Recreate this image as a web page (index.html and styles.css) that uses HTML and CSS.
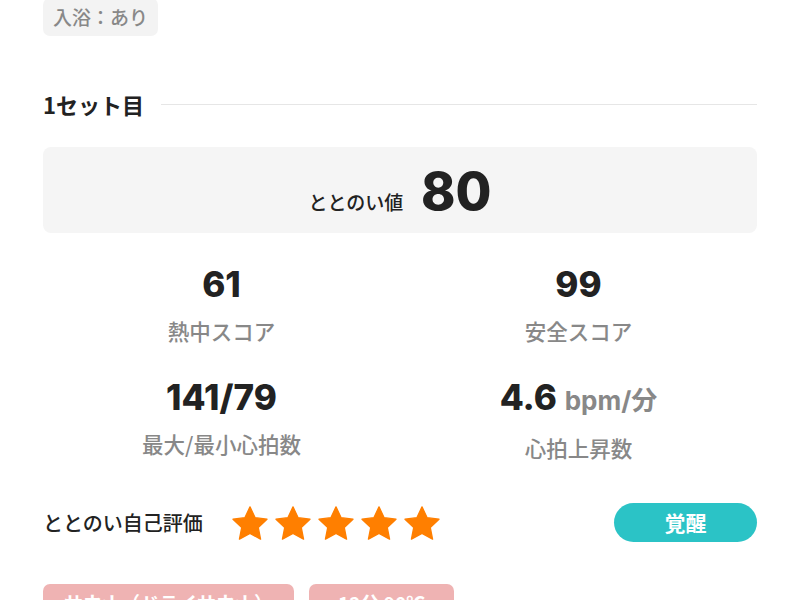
FILE: index.html
```html
<!DOCTYPE html>
<html lang="ja">
<head>
  <meta charset="UTF-8">
  <meta name="viewport" content="width=device-width, initial-scale=1.0">
  <title>サウナ記録</title>
  <link rel="stylesheet" href="styles.css">
</head>
<body>
<main class="record">
  <div class="tags">
    <span class="tag">入浴：あり</span>
  </div>

  <section class="set">
    <div class="set-title">
      <h2>1セット目</h2>
      <span class="set-line"></span>
    </div>

    <div class="score-card">
      <div class="score">
        <span class="score-label">ととのい値</span>
        <span class="score-value">80</span>
      </div>
    </div>

    <div class="stats">
      <div class="stat">
        <div class="stat-value">61</div>
        <div class="stat-label">熱中スコア</div>
      </div>
      <div class="stat">
        <div class="stat-value">99</div>
        <div class="stat-label">安全スコア</div>
      </div>
      <div class="stat">
        <div class="stat-value">141/79</div>
        <div class="stat-label">最大/最小心拍数</div>
      </div>
      <div class="stat">
        <div class="stat-value">4.6 <span class="stat-unit">bpm/分</span></div>
        <div class="stat-label">心拍上昇数</div>
      </div>
    </div>

    <div class="rating">
      <span class="rating-label">ととのい自己評価</span>
      <div class="stars">
        <svg class="star" viewBox="1.2 1.3 21.6 20.6"><path d="M12 1.8l3.1 6.6 7.2.9-5.3 5 1.4 7.1L12 17.9l-6.4 3.5L7 14.3l-5.3-5 7.2-.9z"/></svg>
        <svg class="star" viewBox="1.2 1.3 21.6 20.6"><path d="M12 1.8l3.1 6.6 7.2.9-5.3 5 1.4 7.1L12 17.9l-6.4 3.5L7 14.3l-5.3-5 7.2-.9z"/></svg>
        <svg class="star" viewBox="1.2 1.3 21.6 20.6"><path d="M12 1.8l3.1 6.6 7.2.9-5.3 5 1.4 7.1L12 17.9l-6.4 3.5L7 14.3l-5.3-5 7.2-.9z"/></svg>
        <svg class="star" viewBox="1.2 1.3 21.6 20.6"><path d="M12 1.8l3.1 6.6 7.2.9-5.3 5 1.4 7.1L12 17.9l-6.4 3.5L7 14.3l-5.3-5 7.2-.9z"/></svg>
        <svg class="star" viewBox="1.2 1.3 21.6 20.6"><path d="M12 1.8l3.1 6.6 7.2.9-5.3 5 1.4 7.1L12 17.9l-6.4 3.5L7 14.3l-5.3-5 7.2-.9z"/></svg>
      </div>
      <span class="mood">覚醒</span>
    </div>

    <div class="tags">
      <span class="tag tag-sauna">サウナ（ドライサウナ）</span>
      <span class="tag tag-sauna tag-wide">12分 90℃</span>
    </div>
  </section>
</main>
</body>
</html>
```

FILE: styles.css
```css
body {
  font-family: "Noto Sans CJK JP", "Noto Sans", sans-serif;
  background-color: #fff;
  margin: 0;
  padding: 0;
  color: #222;
  overflow: hidden;
}
.record {
  padding: 0 43px;
}
.tags {
  display: flex;
  gap: 15px;
}
.record > .tags {
  margin-top: -2px;
}
.tag {
  background-color: #f3f3f3;
  color: #888;
  font-size: 19px;
  font-weight: 500;
  line-height: 26px;
  padding: 6px 10px;
  border-radius: 7px;
}
.tag-sauna {
  background-color: #efb3b3;
  color: #fff;
  font-weight: 700;
  padding: 6px 21px;
}
.tag-wide {
  padding: 6px 29px;
}
.set-title {
  display: flex;
  align-items: center;
  gap: 17px;
  margin-top: 54px;
}
.set-title h2 {
  margin: 0;
  font-size: 22px;
  font-weight: 700;
  line-height: 28px;
}
.set-line {
  flex: 1;
  height: 1px;
  background-color: #e6e6e6;
}
.score-card {
  margin-top: 29px;
  height: 86px;
  background-color: #f5f5f5;
  border-radius: 8px;
  display: flex;
  align-items: center;
  justify-content: center;
}
.score {
  margin-top: 4px;
}
.score-label {
  font-size: 19px;
  font-weight: 500;
  margin-right: 14px;
}
.score-value {
  font-family: Inter, "Noto Sans CJK JP", sans-serif;
  font-size: 52px;
  font-weight: 800;
  line-height: 1;
}
.stats {
  display: grid;
  grid-template-columns: 1fr 1fr;
  row-gap: 32px;
  margin-top: 31px;
  text-align: center;
}
.stat-value {
  font-family: Inter, "Noto Sans CJK JP", sans-serif;
  font-size: 35px;
  font-weight: 800;
  line-height: 40px;
}
.stat-unit {
  font-size: 26px;
  font-weight: 700;
  color: #888;
}
.stat-label {
  margin-top: 13px;
  font-size: 21.5px;
  font-weight: 500;
  color: #888;
  line-height: 28px;
}
.rating {
  display: flex;
  align-items: center;
  margin-top: 41px;
}
.rating-label {
  font-size: 20px;
  font-weight: 500;
  width: 189px;
}
.stars {
  display: flex;
  gap: 7px;
  flex: 1;
}
.star {
  width: 36px;
  height: 34px;
  fill: #ff7f00;
  stroke: #ff7f00;
  stroke-width: 0.8;
  stroke-linejoin: round;
}
.mood {
  background-color: #2bc3c6;
  color: #fff;
  font-size: 21px;
  font-weight: 700;
  width: 143px;
  height: 39px;
  line-height: 39px;
  text-align: center;
  border-radius: 20px;
}
.set > .tags {
  margin-top: 42px;
}
```
